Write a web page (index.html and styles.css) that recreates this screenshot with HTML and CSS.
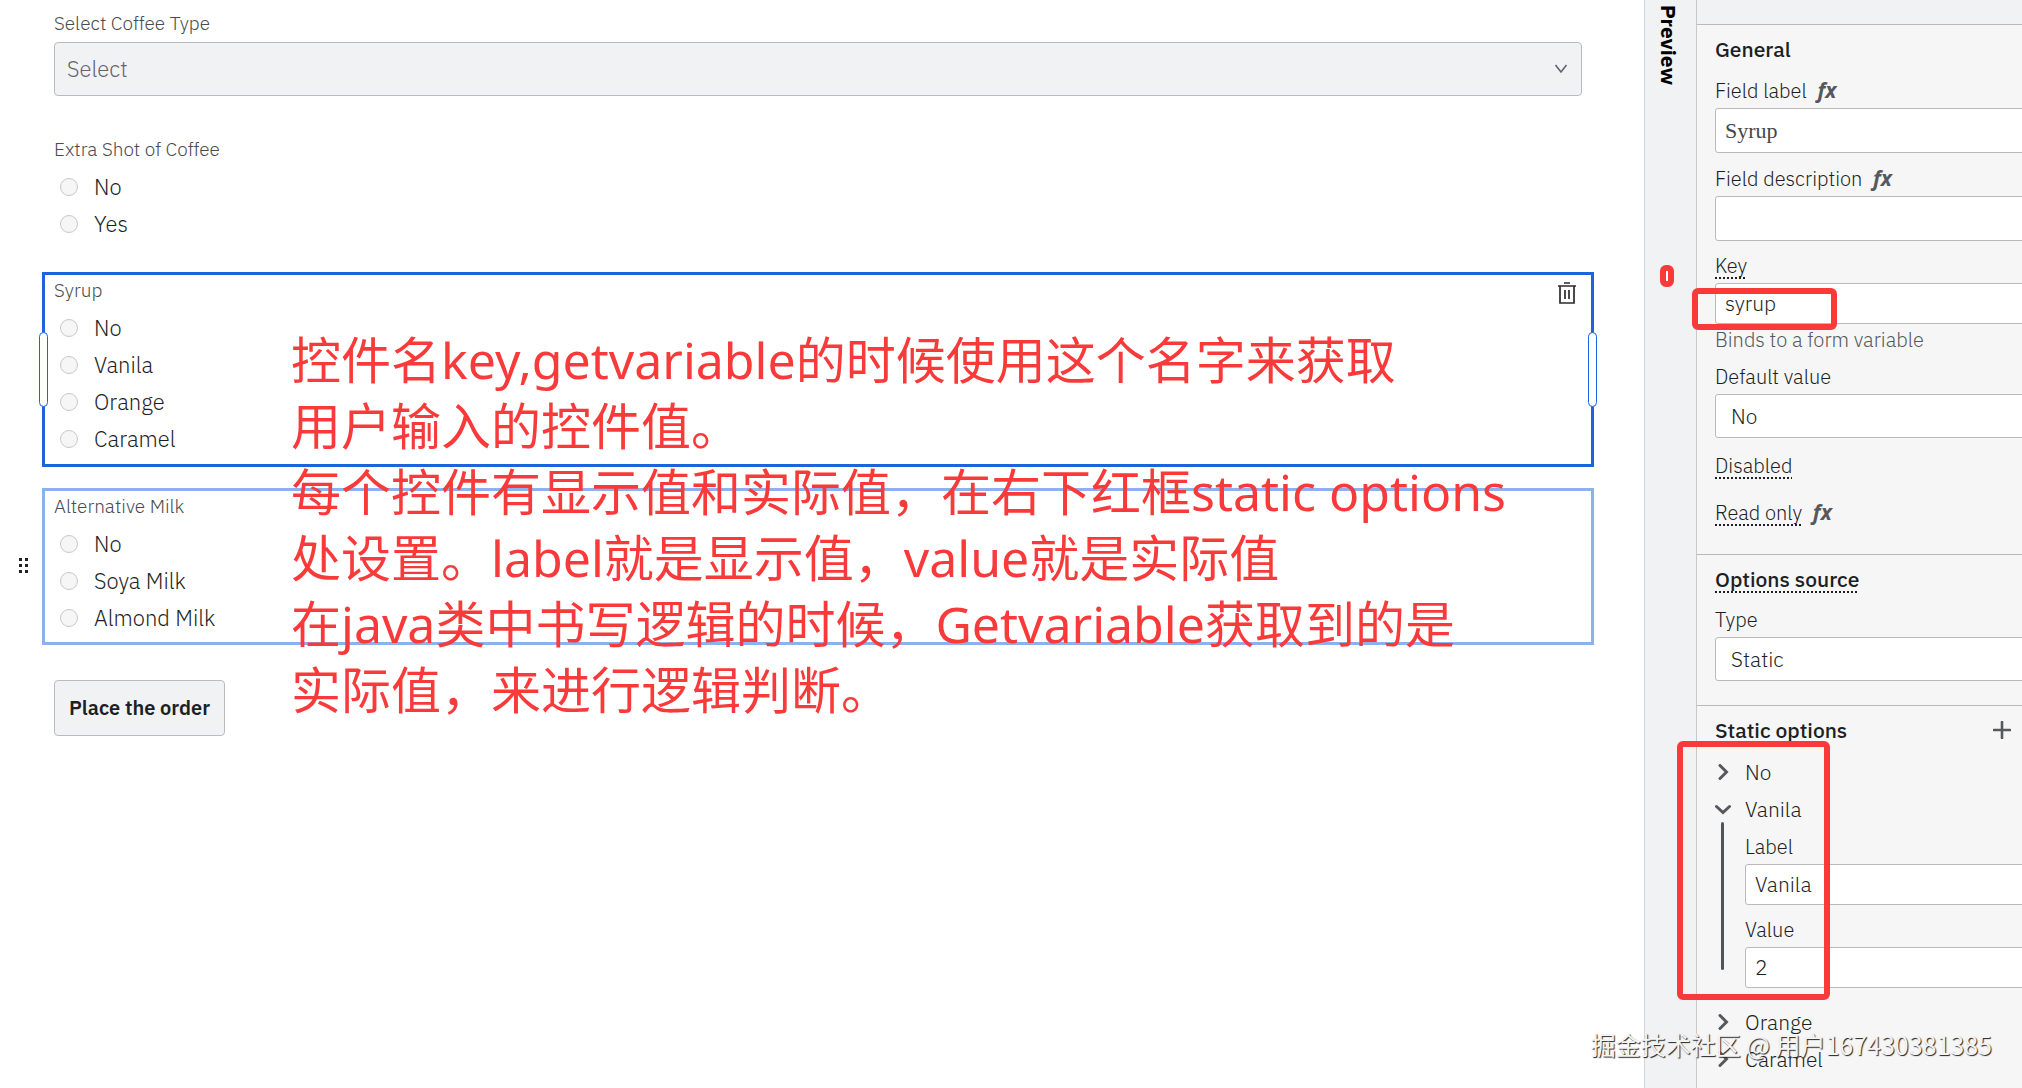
FILE: index.html
```html
<!DOCTYPE html>
<html lang="en">
<head>
<meta charset="utf-8">
<title>Form editor</title>
<link rel="stylesheet" href="styles.css">
</head>
<body>
<div class="editor">
  <main class="canvas">
    <div class="field">
      <label class="field-label" for="coffee">Select Coffee Type</label>
      <div class="select-wrap">
        <select id="coffee" class="coffee-select"><option>Select</option></select>
        <svg class="select-arrow" viewBox="0 0 14 10" aria-hidden="true"><path d="M1.500 1 L7 8 L12.500 1" fill="none" stroke="#62626e" stroke-width="1.600"/></svg>
      </div>
    </div>

    <fieldset class="field field-extra">
      <legend class="field-label">Extra Shot of Coffee</legend>
      <label class="option"><input type="radio" name="extra">No</label>
      <label class="option"><input type="radio" name="extra">Yes</label>
    </fieldset>

    <fieldset class="field field-boxed selected">
      <legend class="field-label">Syrup</legend>
      <label class="option"><input type="radio" name="syrup">No</label>
      <label class="option"><input type="radio" name="syrup">Vanila</label>
      <label class="option"><input type="radio" name="syrup">Orange</label>
      <label class="option"><input type="radio" name="syrup">Caramel</label>
      <button class="delete" type="button" aria-label="Delete">
        <svg viewBox="0 0 20 22" fill="none" stroke="#2b2b2b" stroke-width="1.700" aria-hidden="true"><path d="M1 4H19M3 4V21H17V4M7 1H13M8 8V17M12 8V17"/></svg>
      </button>
      <span class="handle handle-left"></span>
      <span class="handle handle-right"></span>
    </fieldset>

    <fieldset class="field field-boxed hovered">
      <legend class="field-label">Alternative Milk</legend>
      <label class="option"><input type="radio" name="milk">No</label>
      <label class="option"><input type="radio" name="milk">Soya Milk</label>
      <label class="option"><input type="radio" name="milk">Almond Milk</label>
      <svg class="grip" viewBox="0 0 10 16" fill="#222" aria-hidden="true"><path d="M0 0h3v3H0zM6 0h3v3H6zM0 6h3v3H0zM6 6h3v3H6zM0 12h3v3H0zM6 12h3v3H6z"/></svg>
    </fieldset>

    <button class="submit" type="button">Place the order</button>

    <p class="note">控件名key,getvariable的时候使用这个名字来获取<br>用户输入的控件值。<br>每个控件有显示值和实际值，在右下红框static options<br>处设置。label就是显示值，value就是实际值<br>在java类中书写逻辑的时候，Getvariable获取到的是<br>实际值，来进行逻辑判断。</p>
  </main>

  <aside class="rail">
    <span class="rail-text">Preview</span>
    <span class="rail-mark"></span>
  </aside>

  <aside class="panel">
    <div class="panel-head"></div>
    <section class="group group-general">
      <h2 class="group-title">General</h2>
      <div class="row">
        <label class="label" for="f-label">Field label <i class="fx">fx</i></label>
        <input id="f-label" class="text tall serif" value="Syrup">
      </div>
      <div class="row">
        <label class="label" for="f-desc">Field description <i class="fx">fx</i></label>
        <input id="f-desc" class="text tall">
      </div>
      <div class="row row-key">
        <label class="label" for="f-key"><span class="dotted">Key</span></label>
        <input id="f-key" class="text" value="syrup">
        <span class="frame frame-key"></span>
        <span class="hint">Binds to a form variable</span>
      </div>
      <div class="row row-default">
        <label class="label" for="f-default">Default value</label>
        <select id="f-default" class="text choice"><option>No</option></select>
      </div>
      <div class="toggle"><span class="dotted">Disabled</span></div>
      <div class="toggle"><span class="dotted">Read only</span> <i class="fx">fx</i></div>
    </section>

    <section class="group group-source">
      <h2 class="group-title"><span class="dotted">Options source</span></h2>
      <div class="row">
        <label class="label" for="f-type">Type</label>
        <select id="f-type" class="text choice"><option>Static</option></select>
      </div>
    </section>

    <section class="group group-options">
      <div class="options-head">
        <h2 class="group-title">Static options</h2>
        <button class="add" type="button" aria-label="Add option">
          <svg viewBox="0 0 18 18" aria-hidden="true"><path d="M9 1V17M1 9H17" stroke="#55585c" stroke-width="2.600" stroke-linecap="round"/></svg>
        </button>
      </div>
      <button class="entry" type="button"><svg viewBox="0 0 16 16" aria-hidden="true"><path d="M5 1.500L11.500 8L5 14.500"/></svg>No</button>
      <button class="entry" type="button"><svg viewBox="0 0 16 16" aria-hidden="true"><path d="M1.500 5.500L8 11.500L14.500 5.500"/></svg>Vanila</button>
      <div class="entry-body">
        <div class="row">
          <label class="label" for="o-label">Label</label>
          <input id="o-label" class="text" value="Vanila">
        </div>
        <div class="row">
          <label class="label" for="o-value">Value</label>
          <input id="o-value" class="text" value="2">
        </div>
      </div>
      <button class="entry" type="button"><svg viewBox="0 0 16 16" aria-hidden="true"><path d="M5 1.500L11.500 8L5 14.500"/></svg>Orange</button>
      <button class="entry" type="button"><svg viewBox="0 0 16 16" aria-hidden="true"><path d="M5 1.500L11.500 8L5 14.500"/></svg>Caramel</button>
      <span class="frame frame-options"></span>
    </section>
  </aside>
  <div class="watermark">掘金技术社区 @ 用户167430381385</div>
</div>
</body>
</html>
```
FILE: styles.css
```css
* { box-sizing: border-box; }

body {
  margin: 0;
  font-family: "IBM Plex Sans", Roboto, "Noto Sans CJK SC", sans-serif;
  font-size: 21px;
  font-weight: 300;
  color: #1c1f24;
  background: #fff;
}

button, input, select { font: inherit; color: inherit; margin: 0; }

.editor {
  position: relative;
  display: flex;
  min-height: 100vh;
  overflow: hidden;
}

/* form canvas */
.canvas {
  position: relative;
  flex: 1;
  min-width: 0;
  padding: 10px 50px 0 42px;
}

.field {
  position: relative;
  min-width: 0;
  margin: 0;
  padding: 0 12px;
  border: 0;
}

.field-label {
  display: block;
  height: 28px;
  padding: 0;
  font-size: 19px;
  line-height: 26px;
  color: #484b51;
}

.select-wrap { position: relative; margin-top: 4px; }

.coffee-select {
  appearance: none;
  display: block;
  width: 100%;
  height: 54px;
  padding: 0 12px 2px;
  border: 1px solid #b8bbc0;
  border-radius: 4px;
  background: #f1f2f4;
  font-size: 22px;
  color: #62646f;
}

.select-arrow {
  position: absolute;
  right: 14px;
  top: 22px;
  width: 14px;
  height: 10px;
}

.field-extra { margin-top: 40px; }

.option {
  display: flex;
  align-items: center;
  height: 37px;
  gap: 16px;
  padding-left: 6px;
  font-size: 22px;
}

.field-extra .field-label, .field-boxed .field-label { margin-bottom: 4px; }

.option input {
  appearance: none;
  width: 18px;
  height: 18px;
  border: 1px solid #c8c8c8;
  border-radius: 50%;
  background: #f6f6f6;
}

.field-boxed {
  padding: 2px 9px 7px;
  border: 3px solid #1d63e0;
}

.field-boxed .field-label { float: left; width: 100%; }
.field-boxed .option { clear: both; }

.selected { margin-top: 30px; }
.hovered { margin-top: 21px; padding-bottom: 6px; border-color: #8db1ee; }

.delete {
  position: absolute;
  top: 7px;
  right: 14px;
  width: 20px;
  height: 22px;
  padding: 0;
  border: 0;
  background: none;
}

.delete svg { display: block; width: 20px; height: 22px; }

.handle {
  position: absolute;
  top: 57px;
  width: 9px;
  height: 75px;
  border: 1px solid #1d63e0;
  border-radius: 5px;
  background: #fff;
}

.handle-left { left: -6px; }
.handle-right { right: -6px; }

.grip {
  position: absolute;
  left: -26px;
  top: 67px;
  width: 10px;
  height: 16px;
}

.submit {
  display: block;
  margin: 35px 12px 0;
  height: 56px;
  padding: 0 14px 2px;
  border: 1px solid #b8bbc0;
  border-radius: 4px;
  background: #f1f2f4;
  font-size: 20px;
  font-weight: 600;
}

/* annotation written over the canvas */
.note {
  position: absolute;
  left: 291px;
  top: 327px;
  margin: 0;
  font: 400 50px/66px "Noto Sans", "Noto Sans CJK SC", sans-serif;
  color: #f83b3a;
  white-space: nowrap;
}

/* preview rail */
.rail {
  position: relative;
  flex: none;
  width: 53px;
  padding: 5px 13px;
  border-left: 1px solid #d3d5d7;
  border-right: 1px solid #c6c8ca;
  background: #f0f2f4;
}

.rail-text {
  writing-mode: vertical-rl;
  line-height: 22px;
  font-weight: 700;
  color: #000;
}

.rail-mark {
  position: absolute;
  top: 265px;
  left: 15px;
  width: 14px;
  height: 22px;
  border: 6px solid #f83b3a;
  border-radius: 6px;
  background: #fff;
}

/* properties panel */
.panel {
  flex: none;
  width: 325px;
  background: #f6f6f6;
}

.panel-head {
  height: 25px;
  border-bottom: 1px solid #b9babd;
  background: #f1f2f4;
}

.group { position: relative; padding: 10px 0 0 18px; }
.group + .group { border-top: 1px solid #b9babd; }

.group-title {
  height: 30px;
  margin: 0;
  font-size: 21px;
  line-height: 28px;
  font-weight: 500;
}

.dotted {
  text-decoration: underline dotted 2px;
  text-underline-offset: 4px;
  text-decoration-skip-ink: none;
}

.row { display: flex; flex-direction: column; }
.label { line-height: 30px; height: 32px; font-size: 20px; white-space: nowrap; }

.fx {
  margin-left: 6px;
  font-family: "Open Sans", sans-serif;
  font-weight: 700;
  font-size: 21px;
  line-height: 20px;
  color: #55585c;
}

.text {
  appearance: none;
  height: 41px;
  margin-right: -10px;
  padding: 0 9px 2px;
  border: 1px solid #b9babd;
  border-radius: 3px;
  background: #fff;
}

.tall { height: 45px; }
.serif { padding-bottom: 0; font-family: "Liberation Serif", serif; font-size: 22px; color: #44474c; }
.choice { height: 44px; padding: 0 15px; }

.group-general { padding-bottom: 17px; }
.group-general .row { margin-top: 11px; }
.group-general .row-key { position: relative; margin-top: 10px; }
.hint { font-size: 20px; line-height: 32px; color: #55585e; }
.group-general .row-default { margin-top: 6px; margin-bottom: 5px; }
.toggle { height: 47px; font-size: 20px; line-height: 46px; }
.group-source { padding-bottom: 24px; }
.group-source .row { margin-top: 10px; }

.options-head {
  display: flex;
  justify-content: space-between;
  align-items: center;
  margin-bottom: 7px;
}

.add {
  width: 40px;
  height: 30px;
  padding: 0 11px 2px;
  border: 0;
  background: none;
}

.add svg { display: block; width: 18px; height: 18px; }

.entry {
  display: flex;
  align-items: center;
  gap: 14px;
  height: 37px;
  padding: 0;
  border: 0;
  background: none;
}

.entry svg {
  width: 16px;
  height: 16px;
  fill: none;
  stroke: #55585c;
  stroke-width: 3px;
  stroke-linecap: round;
}

.entry-body {
  position: relative;
  display: flex;
  flex-direction: column;
  gap: 10px;
  padding: 5px 0 15px 30px;
}

.entry-body::before {
  content: "";
  position: absolute;
  left: 6px;
  top: -5px;
  width: 3px;
  height: 148px;
  border-radius: 2px;
  background: #50555a;
}

/* red frames drawn around the important fields */
.frame {
  position: absolute;
  border: 6px solid #f83b3a;
  border-radius: 6px;
}

.frame-key { left: -23px; top: 37px; width: 145px; height: 42px; }
.frame-options { left: -20px; top: 35px; width: 153px; height: 259px; }

.watermark {
  position: absolute;
  right: 30px;
  bottom: 26px;
  font: 400 25px/36px "Noto Sans CJK SC", sans-serif;
  color: #f4f4f4;
  text-shadow: 1px 1px 1px #222;
}
```
